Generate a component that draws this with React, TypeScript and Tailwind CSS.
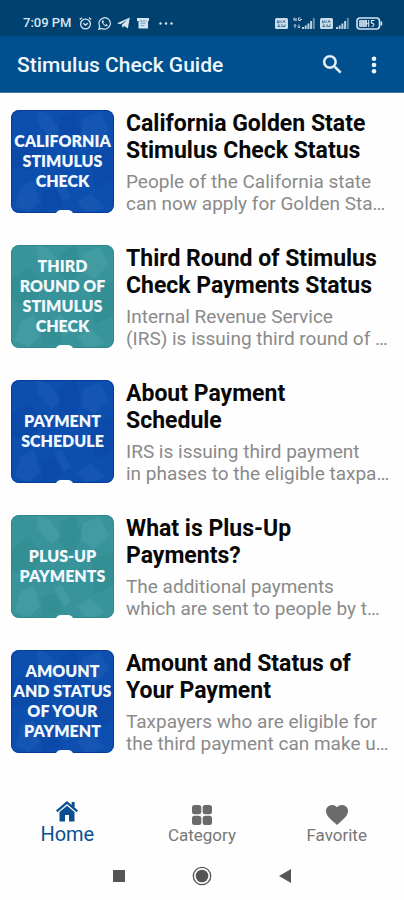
import React from "react";

type Tone = "blue" | "teal";

interface Article {
  badge: string[];
  tone: Tone;
  title: string[];
  summary: string[];
}

const articles: Article[] = [
  {
    badge: ["CALIFORNIA", "STIMULUS", "CHECK"],
    tone: "blue",
    title: ["California Golden State", "Stimulus Check Status"],
    summary: ["People of the California state", "can now apply for Golden Sta…"],
  },
  {
    badge: ["THIRD", "ROUND OF", "STIMULUS", "CHECK"],
    tone: "teal",
    title: ["Third Round of Stimulus", "Check Payments Status"],
    summary: ["Internal Revenue Service", "(IRS) is issuing third round of …"],
  },
  {
    badge: ["PAYMENT", "SCHEDULE"],
    tone: "blue",
    title: ["About Payment", "Schedule"],
    summary: ["IRS is issuing third payment", "in phases to the eligible taxpa…"],
  },
  {
    badge: ["PLUS-UP", "PAYMENTS"],
    tone: "teal",
    title: ["What is Plus-Up", "Payments?"],
    summary: ["The additional payments", "which are sent to people by t…"],
  },
  {
    badge: ["AMOUNT", "AND STATUS", "OF YOUR", "PAYMENT"],
    tone: "blue",
    title: ["Amount and Status of", "Your Payment"],
    summary: ["Taxpayers who are eligible for", "the third payment can make u…"],
  },
];

function SimIcon() {
  return (
    <svg width="13" height="11" viewBox="0 0 13 11" aria-hidden="true">
      <rect width="13" height="11" rx="1.5" fill="#c9dcea" />
      <path d="M2.5 2.5v2.2h1.6V2.5M6 4.8V2.5M7.8 4.7l1.2-2.2 1.2 2.2M2.5 8.5h3M3.8 6.2v2.3M7 6.2v2.3h3V6.4" fill="none" stroke="#2d6290" strokeWidth=".9" />
    </svg>
  );
}

function SignalBars() {
  return (
    <svg width="13" height="11" viewBox="0 0 13 11" fill="#bcd2e4" aria-hidden="true">
      <path d="M0 9h2v2H0zM2.700 7.500h2V11h-2zM5.400 5.500h2V11h-2zM8.100 3h2v8h-2z" />
      <path d="M10.800 0h2v11h-2z" opacity=".55" />
    </svg>
  );
}

function StatusBar() {
  return (
    <div className="flex h-9 items-end justify-between bg-[#00416f] pr-[21px] pb-[6px] pl-[23px] text-[#d5e5f1]">
      <div className="flex h-[14px] items-center">
        <span className="mr-[7px] text-[13px] leading-[14px] font-medium">7:09 PM</span>
        <svg className="mr-[6px]" width="13" height="13" viewBox="0 0 13 13" fill="none" stroke="currentColor" strokeWidth="1.3" aria-hidden="true">
          <circle cx="6.500" cy="7" r="4.900" />
          <path d="M.7 2.600 3 .8M12.300 2.600 10 .8M4.300 6.300l2.200 1.800 2.300-1.800" />
        </svg>
        <svg className="mr-[6px]" width="13" height="13" viewBox="0 0 13 13" aria-hidden="true">
          <path d="M.8 12.200l.9-3A5.700 5.700 0 1 1 3.900 11.400z" fill="none" stroke="currentColor" strokeWidth="1.200" />
          <path d="M4.500 3.300c-.9.600-.9 1.700-.3 2.800.9 1.600 2.100 2.700 3.700 3.200 1 .2 1.800-.4 1.800-1.400L8.200 7.100l-.8.8c-1-.4-1.700-1.100-2.100-2l.6-.9-.6-1.700z" fill="currentColor" />
        </svg>
        <svg className="mr-[7px]" width="13" height="12" viewBox="0 0 13 12" fill="currentColor" aria-hidden="true">
          <path d="M0 6.200 12.800.5 10.900 11.600 7.200 9 5.400 10.800 4.900 7.700 10.300 3 3.400 7.300z" />
        </svg>
        <svg className="mr-[10px]" width="12" height="11" viewBox="0 0 12 11" aria-hidden="true">
          <path d="M0 0h12v3h-1v7.500H1.500V3H0z" fill="currentColor" />
          <path d="M2.500 3h7M3.500 5.200h5M3.500 7.500h4" stroke="#5f8bb0" strokeWidth=".8" />
        </svg>
        <svg width="14" height="3" viewBox="0 0 14 3" fill="currentColor" aria-hidden="true">
          <circle cx="1.500" cy="1.500" r="1.200" />
          <circle cx="7" cy="1.500" r="1.200" />
          <circle cx="12.500" cy="1.500" r="1.200" />
        </svg>
      </div>
      <div className="flex h-[14px] items-center">
        <SimIcon />
        <svg className="ml-[5px]" width="9" height="12" viewBox="0 0 9 12" fill="none" stroke="#bcd2e4" strokeWidth="1" aria-hidden="true">
          <path d="M1.500.5 .5 3h3M3 1v3M7.500 1H5.500v2.500h2V2.300M8 2.500h1M2 11V7.500M.8 8.800 2 7.500l1.200 1.300M6 7.500V11M4.800 9.700 6 11l1.200-1.300" />
        </svg>
        <SignalBars />
        <span className="mr-[3px] ml-[5px]">
          <SimIcon />
        </span>
        <SignalBars />
        <svg className="ml-[7px]" width="27" height="13" viewBox="0 0 27 13" aria-hidden="true">
          <rect x="1" y="1" width="22.500" height="11" rx="3" fill="none" stroke="#d5e5f1" strokeWidth="1.600" />
          <rect x="3" y="3" width="8" height="7" rx="1" fill="#b5cbdc" />
          <path d="M24.500 4.500h1.700v4h-1.700z" fill="#d5e5f1" />
          <path d="M10.500 3v3.700H13M12.700 3v7M18.500 3.500h-3v2.700c3-.6 3.500 3.200 0 3.300" fill="none" stroke="#d5e5f1" strokeWidth="1.100" />
        </svg>
      </div>
    </div>
  );
}

function AppBar() {
  return (
    <header className="flex h-[57px] items-center justify-between border-b border-[#3b79ab] bg-[#00508f] pt-px pr-[14px] pl-[17px] text-[#eef6fc]">
      <h1 className="text-[21px] leading-7 font-medium">Stimulus Check Guide</h1>
      <div className="flex items-center gap-[10px]">
        <button type="button" aria-label="Search" className="flex h-8 w-8 items-center justify-center">
          <svg width="25" height="25" viewBox="0 0 24 24" fill="currentColor" stroke="currentColor" strokeWidth=".4" aria-hidden="true">
            <path d="M15.500 14h-.79l-.28-.27A6.470 6.470 0 0 0 16 9.500 6.500 6.500 0 1 0 9.500 16c1.610 0 3.090-.59 4.230-1.570l.27.280v.79l5 4.990L20.490 19l-4.990-5zm-6 0C7.010 14 5 11.990 5 9.500S7.010 5 9.500 5 14 7.010 14 9.500 11.990 14 9.500 14z" />
          </svg>
        </button>
        <button type="button" aria-label="More options" className="flex h-8 w-8 items-center justify-center">
          <svg width="24" height="24" viewBox="0 0 24 24" fill="currentColor" aria-hidden="true">
            <circle cx="12" cy="5.800" r="2.300" />
            <circle cx="12" cy="12" r="2.300" />
            <circle cx="12" cy="18.200" r="2.300" />
          </svg>
        </button>
      </div>
    </header>
  );
}

function Thumbnail({ badge, tone }: { badge: string[]; tone: Tone }) {
  const blue = tone === "blue";
  return (
    <div
      className={`relative flex h-[103px] w-[103px] shrink-0 flex-col items-center justify-center overflow-hidden rounded-lg pb-[2px] ${
        blue ? "bg-[#0d4fae]" : "bg-[#38959a]"
      }`}
    >
      <svg className="absolute inset-0 h-full w-full" viewBox="0 0 103 103" aria-hidden="true">
        <g fill={blue ? "#2f6cc0" : "#60b0b2"} opacity=".25">
          <path d="M26 0 38 4 50 21 40 29 27 14zM72 8l17-6 9 18-15 14-13-9z" />
          <path d="M10 76 23 70l6 22-12 10L4 96zM43 73l7-4 10 18-7 4zM66 92l14-9 14 15-18 5z" />
        </g>
        <g fill={blue ? "#063d99" : "#267f86"} opacity=".25">
          <path d="M50 7 64 0l6 22-9 18-14-13zM0 34l18-12 15 18-12 20L0 57zM80 45l23-9v34L84 79zM30 82l15-4 6 19-20 6z" />
        </g>
        <rect x=".5" y=".5" width="102" height="102" rx="7.500" fill="none" stroke={blue ? "#063b9a" : "#2f898d"} />
        <path d="M45 103c1-2 3-3 5-3h7c2 0 4 1 5 3z" fill="#fff" />
      </svg>
      <div className="relative text-center font-[Lato,sans-serif] text-[16px] leading-5 font-extrabold whitespace-nowrap text-[#f2f8fd]">
        {badge.map((line) => (
          <div key={line}>{line}</div>
        ))}
      </div>
    </div>
  );
}

function ArticleRow({ article }: { article: Article }) {
  return (
    <li>
      <a href="#article" className="flex h-[103px] gap-3">
        <Thumbnail badge={article.badge} tone={article.tone} />
        <div className="min-w-0 flex-1 whitespace-nowrap">
          <h2 className="text-[23px] leading-[27px] font-bold text-[#080808]">
            {article.title.map((line) => (
              <span key={line} className="block">{line}</span>
            ))}
          </h2>
          <p className="mt-[7px] text-[19px] leading-[22px] text-[#8a8a8a]">
            {article.summary.map((line) => (
              <span key={line} className="block">{line}</span>
            ))}
          </p>
        </div>
      </a>
    </li>
  );
}

function BottomNav() {
  return (
    <nav className="grid h-[62px] grid-cols-3 border-t border-[#fafafa] text-[#6b6b6b]">
      <a href="#home" aria-current="page" className="flex flex-col items-center pt-3 text-[#0a4f91]">
        <svg width="22" height="21" viewBox="0 0 22 21" fill="currentColor" aria-hidden="true">
          <path d="M11 0 0 9.600 1.400 11.200 11 3 20.600 11.200 22 9.600 18.600 6.600V1h-3v3z" />
          <path d="M11 4.700 3.500 11v9.500H9V14h4v6.500h5.500V11z" />
        </svg>
        <span className="text-[20px] leading-6">Home</span>
      </a>
      <a href="#category" className="flex flex-col items-center pt-4">
        <svg width="20" height="20" viewBox="0 0 20 20" fill="currentColor" aria-hidden="true">
          <rect x="0" y="0" width="9.300" height="9.300" rx="2.500" />
          <rect x="10.700" y="0" width="9.300" height="9.300" rx="2.500" />
          <rect x="0" y="10.700" width="9.300" height="9.300" rx="2.500" />
          <rect x="10.700" y="10.700" width="9.300" height="9.300" rx="2.500" />
        </svg>
        <span className="text-[17px] leading-5 text-[#777]">Category</span>
      </a>
      <a href="#favorite" className="flex flex-col items-center pt-4">
        <svg width="22" height="20" viewBox="0 0 22 20" fill="currentColor" aria-hidden="true">
          <path d="M11 20 9.400 18.600C3.700 13.500 0 10.200 0 6A5.900 5.900 0 0 1 6 0c1.900 0 3.800.9 5 2.300A6.600 6.600 0 0 1 16 0a5.900 5.900 0 0 1 6 6c0 4.200-3.700 7.500-9.400 12.600z" />
        </svg>
        <span className="text-[17px] leading-5 text-[#777]">Favorite</span>
      </a>
    </nav>
  );
}

function SystemNav() {
  return (
    <div className="flex h-[50px] items-center justify-center gap-[63px] pt-[2px] text-[#555]">
      <button type="button" aria-label="Recent apps" className="flex w-5 justify-center">
        <svg width="12" height="12" viewBox="0 0 12 12" aria-hidden="true">
          <rect width="12" height="12" fill="currentColor" />
        </svg>
      </button>
      <button type="button" aria-label="Home screen" className="flex w-5 justify-center">
        <svg width="20" height="20" viewBox="0 0 20 20" aria-hidden="true">
          <circle cx="10" cy="10" r="8.700" fill="none" stroke="currentColor" strokeWidth="1.300" />
          <circle cx="10" cy="10" r="6.300" fill="currentColor" />
        </svg>
      </button>
      <button type="button" aria-label="Back" className="flex w-5 justify-center">
        <svg width="12" height="14" viewBox="0 0 12 14" aria-hidden="true">
          <path d="M0 7 12 0v14z" fill="currentColor" />
        </svg>
      </button>
    </div>
  );
}

export default function App() {
  return (
    <div className="flex min-h-screen flex-col bg-[#fefefe] font-[Roboto,sans-serif]">
      <StatusBar />
      <AppBar />
      <main className="flex-1 pt-[17px] pr-3 pl-[11px]">
        <ul className="flex flex-col gap-8">
          {articles.map((article) => (
            <ArticleRow key={article.title[0]} article={article} />
          ))}
        </ul>
      </main>
      <BottomNav />
      <SystemNav />
    </div>
  );
}
